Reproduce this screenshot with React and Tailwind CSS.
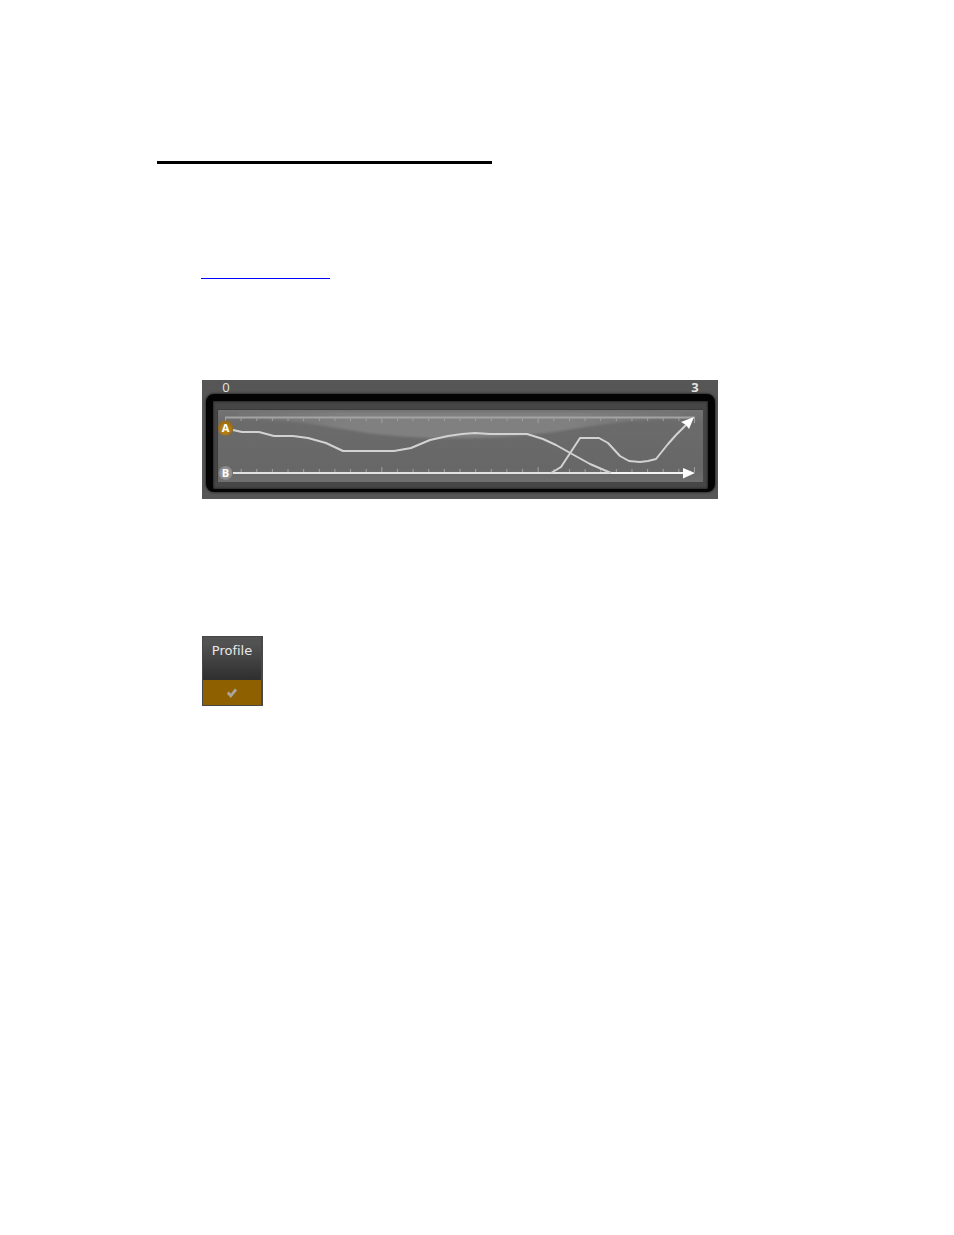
import { useState } from 'react';

const profileA =
  '16,21 25,23 42,23 57,27 76,27 91,29 109,34 126,42 177,42 194,39 213,31 231,27 245,25 258,24 273,25 310,25 326,30 339,36 355,45 373,55 394,64';
const profileB =
  '334,64 344,58 363,29 382,29 391,34 403,47 412,52 423,53 431,52 439,50 451,35 459,26 470,15';

const ticks = Array.from({ length: 31 }, (_, i) => ({
  x: 8.5 + (i * 469) / 30,
  size: i % 10 === 0 ? 5 : 3,
}));

function Curves() {
  return (
    <svg viewBox="0 0 486 73" className="block w-full" role="img" aria-label="Fader profiles">
      <defs>
        <linearGradient id="field" x1="0" y1="0" x2="0" y2="1">
          <stop offset="0" stopColor="#747474" />
          <stop offset="0.2" stopColor="#6b6b6b" />
          <stop offset="0.8" stopColor="#676767" />
          <stop offset="1" stopColor="#6f6f6f" />
        </linearGradient>
        <linearGradient id="shine" x1="0" y1="0" x2="1" y2="0">
          <stop offset="0" stopColor="#7c7c7c" stopOpacity="0.3" />
          <stop offset="0.25" stopColor="#808080" />
          <stop offset="0.75" stopColor="#808080" />
          <stop offset="1" stopColor="#7c7c7c" stopOpacity="0.3" />
        </linearGradient>
        <filter id="soft" x="-5%" y="-30%" width="110%" height="160%">
          <feGaussianBlur stdDeviation="1" />
        </filter>
        <radialGradient id="gold" cx="0.5" cy="0.6">
          <stop offset="0" stopColor="#c98e18" />
          <stop offset="1" stopColor="#9a6d14" />
        </radialGradient>
        <radialGradient id="silver">
          <stop offset="0" stopColor="#a8a8a8" />
          <stop offset="1" stopColor="#858585" />
        </radialGradient>
      </defs>
      <rect width="486" height="73" fill="url(#field)" />
      <path
        d="M20 3 H466 V9 C410 11 380 16 350 21 C290 31 210 32 150 24 C110 17 70 10 20 9 Z"
        fill="url(#shine)"
        filter="url(#soft)"
      />
      <path d="M0 0.5 H486 M0.5 0 V73" stroke="#3c3c3c" />

      {/* time rulers */}
      <path d="M8 8.5 H478" stroke="#a3a3a3" strokeWidth="2" />
      {ticks.map(({ x, size }) => (
        <path key={x} d={`M${x} 9 v${size} M${x} 63 v${-size}`} stroke="#a0a0a0" strokeWidth="1" />
      ))}
      <path d="M16 64 H468" stroke="#e2e2e2" strokeWidth="2" />
      <path d="M394 64 H468" stroke="#f4f4f4" strokeWidth="2" />

      <g fill="none" stroke="#d2d2d2" strokeWidth="2" strokeLinejoin="round">
        <polyline points={profileA} />
        <polyline points={profileB} />
      </g>
      <g fill="#ffffff">
        <path d="M477 8 L472 20 L469 16 L464 13 Z" />
        <path d="M466 59 L478 64 L466 69.5 Z" />
      </g>

      <circle cx="8.5" cy="19" r="7.5" fill="url(#gold)" />
      <circle cx="8.5" cy="64" r="7" fill="url(#silver)" />
      <g fill="#ffffff" fontFamily="'Open Sans', sans-serif" fontWeight="700" fontSize="11" textAnchor="middle">
        <text x="8.5" y="23">A</text>
        <text x="8.5" y="68">B</text>
      </g>
    </svg>
  );
}

function App() {
  const [enabled, setEnabled] = useState(true);

  return (
    <main className="min-h-screen bg-white pt-[161px] pr-8 pb-8 pl-[157px]">
      <hr className="h-[3px] w-full max-w-[335px] border-0 bg-black" />

      <div className="pl-[45px]">
        <a
          href="#profile"
          aria-label="Profile"
          className="mt-[114px] -ml-px block w-full max-w-[129px] border-b border-[#0000ff]"
        />

        {/* Profile graph */}
        <section className="mt-[101px] w-full max-w-[516px] bg-[#565656] pr-[3px] pb-[7px] pl-1">
          <div className="flex h-[14px] justify-between px-4 font-['Open_Sans',sans-serif] text-[13px] leading-[14px] text-[#e4e4e4]">
            <span className="w-2 text-center">0</span>
            <span className="w-2 text-center font-bold">3</span>
          </div>
          <div className="rounded-lg border-x-[7px] border-t-[7px] border-b-[3px] border-[#030303] bg-[#464646] pt-2 pr-[5px] pb-[7px] pl-1 shadow-[0_0_2px_1px_#333333,inset_0_0_2px_1px_#2c2c2c]">
            <Curves />
          </div>
        </section>

        {/* Profile toggle */}
        <label className="mt-[137px] block w-[61px] border-t border-r-2 border-l border-[#484848] bg-linear-to-b from-[#525252] from-10% to-[#303030] to-60%">
          <span className="block h-[43px] pt-1 text-center font-['DejaVu_Sans',sans-serif] text-[13px] leading-5 text-[#e8e8e8] [font-variant-ligatures:none]">
            Profile
          </span>
          <span className="grid h-[26px] place-items-center border-b border-[#484848] bg-[#8f6000]">
            <input
              type="checkbox"
              checked={enabled}
              onChange={(e) => setEnabled(e.target.checked)}
              className="peer col-start-1 row-start-1 h-full w-full appearance-none"
            />
            <svg viewBox="0 0 10 10" className="pointer-events-none invisible col-start-1 row-start-1 size-[10px] peer-checked:visible">
              <path d="M0.8 4.5 L3.8 7.8 L9 1.5" fill="none" stroke="#aaa69c" strokeWidth="2.8" />
            </svg>
          </span>
        </label>
      </div>
    </main>
  );
}

export default App;
